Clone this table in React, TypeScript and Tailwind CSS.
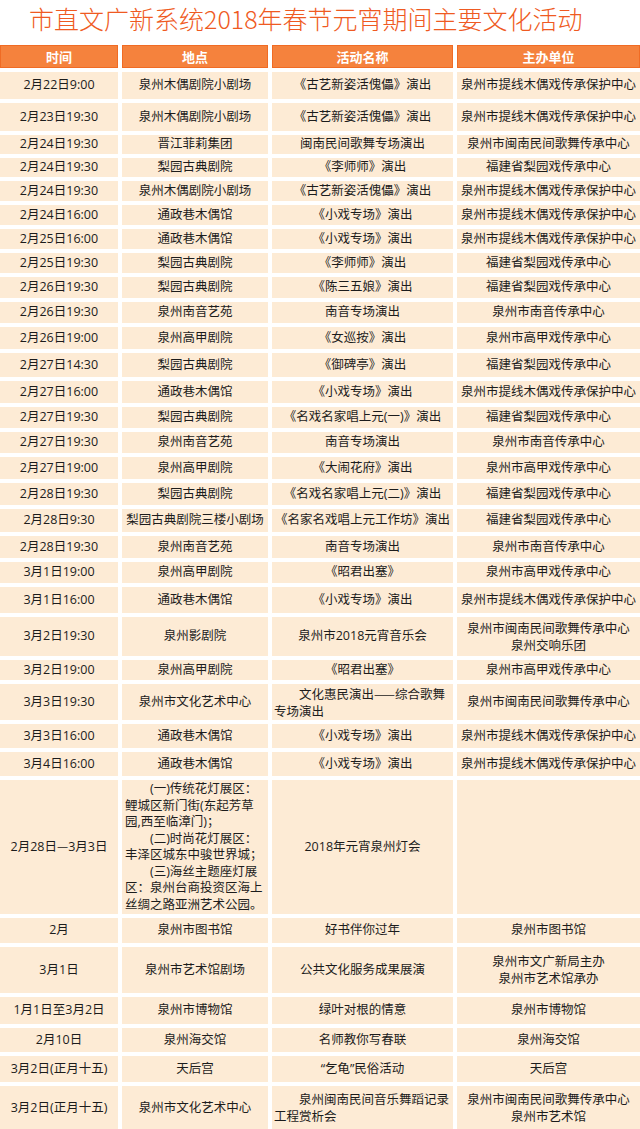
import React from "react";

type Content = string | string[] | { indent: string[] } | { lantern: true };

type Row = [string, Content, Content, Content, string];

const rows: Row[] = [
  ["2月22日9:00", "泉州木偶剧院小剧场", "《古艺新姿活傀儡》演出", "泉州市提线木偶戏传承保护中心", "h-[27px]"],
  ["2月23日19:30", "泉州木偶剧院小剧场", "《古艺新姿活傀儡》演出", "泉州市提线木偶戏传承保护中心", "h-[28px]"],
  ["2月24日19:30", "晋江菲莉集团", "闽南民间歌舞专场演出", "泉州市闽南民间歌舞传承中心", "h-[19px]"],
  ["2月24日19:30", "梨园古典剧院", "《李师师》演出", "福建省梨园戏传承中心", "h-[19px]"],
  ["2月24日19:30", "泉州木偶剧院小剧场", "《古艺新姿活傀儡》演出", "泉州市提线木偶戏传承保护中心", "h-[20px]"],
  ["2月24日16:00", "通政巷木偶馆", "《小戏专场》演出", "泉州市提线木偶戏传承保护中心", "h-[20px]"],
  ["2月25日16:00", "通政巷木偶馆", "《小戏专场》演出", "泉州市提线木偶戏传承保护中心", "h-[20px]"],
  ["2月25日19:30", "梨园古典剧院", "《李师师》演出", "福建省梨园戏传承中心", "h-[20px]"],
  ["2月26日19:30", "梨园古典剧院", "《陈三五娘》演出", "福建省梨园戏传承中心", "h-[21px]"],
  ["2月26日19:30", "泉州南音艺苑", "南音专场演出", "泉州市南音传承中心", "h-[21px]"],
  ["2月26日19:00", "泉州高甲剧院", "《女巡按》演出", "泉州市高甲戏传承中心", "h-[22px]"],
  ["2月27日14:30", "梨园古典剧院", "《御碑亭》演出", "福建省梨园戏传承中心", "h-[24px]"],
  ["2月27日16:00", "通政巷木偶馆", "《小戏专场》演出", "泉州市提线木偶戏传承保护中心", "h-[22px]"],
  ["2月27日19:30", "梨园古典剧院", "《名戏名家唱上元(一)》演出", "福建省梨园戏传承中心", "h-[21px]"],
  ["2月27日19:30", "泉州南音艺苑", "南音专场演出", "泉州市南音传承中心", "h-[21px]"],
  ["2月27日19:00", "泉州高甲剧院", "《大闹花府》演出", "泉州市高甲戏传承中心", "h-[22px]"],
  ["2月28日19:30", "梨园古典剧院", "《名戏名家唱上元(二)》演出", "福建省梨园戏传承中心", "h-[22px]"],
  ["2月28日9:30", "梨园古典剧院三楼小剧场", "《名家名戏唱上元工作坊》演出", "福建省梨园戏传承中心", "h-[23px]"],
  ["2月28日19:30", "泉州南音艺苑", "南音专场演出", "泉州市南音传承中心", "h-[22px]"],
  ["3月1日19:00", "泉州高甲剧院", "《昭君出塞》", "泉州市高甲戏传承中心", "h-[21px]"],
  ["3月1日16:00", "通政巷木偶馆", "《小戏专场》演出", "泉州市提线木偶戏传承保护中心", "h-[26px]"],
  ["3月2日19:30", "泉州影剧院", "泉州市2018元宵音乐会", ["泉州市闽南民间歌舞传承中心", "泉州交响乐团"], "h-[39px]"],
  ["3月2日19:00", "泉州高甲剧院", "《昭君出塞》", "泉州市高甲戏传承中心", "h-[20px]"],
  ["3月3日19:30", "泉州市文化艺术中心", { indent: ["文化惠民演出——综合歌舞", "专场演出"] }, "泉州市闽南民间歌舞传承中心", "h-[36px]"],
  ["3月3日16:00", "通政巷木偶馆", "《小戏专场》演出", "泉州市提线木偶戏传承保护中心", "h-[24px]"],
  ["3月4日16:00", "通政巷木偶馆", "《小戏专场》演出", "泉州市提线木偶戏传承保护中心", "h-[24px]"],
  ["2月28日—3月3日", { lantern: true }, "2018年元宵泉州灯会", "", "h-[134px]"],
  ["2月", "泉州市图书馆", "好书伴你过年", "泉州市图书馆", "h-[25px]"],
  ["3月1日", "泉州市艺术馆剧场", "公共文化服务成果展演", ["泉州市文广新局主办", "泉州市艺术馆承办"], "h-[46px]"],
  ["1月1日至3月2日", "泉州市博物馆", "绿叶对根的情意", "泉州市博物馆", "h-[27px]"],
  ["2月10日", "泉州海交馆", "名师教你写春联", "泉州海交馆", "h-[24px]"],
  ["3月2日(正月十五)", "天后宫", "“乞龟”民俗活动", "天后宫", "h-[26px]"],
  ["3月2日(正月十五)", "泉州市文化艺术中心", { indent: ["泉州闽南民间音乐舞蹈记录", "工程赏析会"] }, ["泉州市闽南民间歌舞传承中心", "泉州市艺术馆"], "h-[44px]"],
];

function T({ s }: { s: string }) {
  const parts = s.split(/(—+)/);
  return (
    <>
      {parts.map((p, i) =>
        /^—+$/.test(p) ? (
          <span key={i} className="font-['Noto_Sans_CJK_SC',sans-serif]">
            {p}
          </span>
        ) : (
          <React.Fragment key={i}>{p}</React.Fragment>
        )
      )}
    </>
  );
}

function Lantern() {
  return (
    <div className="w-full px-[3px] text-left leading-[16.5px] whitespace-nowrap">
      <div className="pl-[25px]">(一)传统花灯展区：</div>
      <div>鲤城区新门街(东起芳草</div>
      <div>园,西至临漳门)；</div>
      <div className="pl-[25px]">(二)时尚花灯展区：</div>
      <div>丰泽区城东中骏世界城；</div>
      <div className="pl-[25px]">(三)海丝主题座灯展</div>
      <div>区：泉州台商投资区海上</div>
      <div>丝绸之路亚洲艺术公园。</div>
    </div>
  );
}

function CellContent({ c }: { c: Content }) {
  if (typeof c === "string")
    return (
      <span className="whitespace-nowrap">
        <T s={c} />
      </span>
    );
  if (Array.isArray(c))
    return (
      <div className="leading-[17px] whitespace-nowrap">
        {c.map((l, i) => (
          <div key={i}>{l}</div>
        ))}
      </div>
    );
  if ("indent" in c)
    return (
      <div className="w-full px-[2px] text-left leading-[17px] whitespace-nowrap">
        <div className="pl-[25px]">
          <T s={c.indent[0]} />
        </div>
        <div>{c.indent[1]}</div>
      </div>
    );
  return <Lantern />;
}

export default function App() {
  const headers = ["时间", "地点", "活动名称", "主办单位"];
  return (
    <div className="w-[640px] bg-white font-['Open_Sans','Noto_Sans_CJK_SC',sans-serif]">
      <div className="h-[45px] pl-[29px] pt-[3px] text-[25px] leading-[30px] font-light text-[#ef5a22] font-['Noto_Sans_CJK_SC',sans-serif] whitespace-nowrap">
        市直文广新系统2018年春节元宵期间主要文化活动
      </div>
      <div className="grid grid-cols-[118px_146px_181px_183px] gap-[4px]">
        {headers.map((h) => (
          <div
            key={h}
            className="h-[23px] flex items-center justify-center bg-[#f5823d] border border-[#f06b24] text-white font-bold text-[13px] font-['Noto_Sans_CJK_SC',sans-serif]"
          >
            {h}
          </div>
        ))}
        {rows.map((r, ri) =>
          [r[0], r[1], r[2], r[3]].map((c, ci) => (
            <div
              key={ri + "-" + ci}
              className={
                r[4] +
                " flex items-center justify-center text-center bg-[#fdebd5] text-[12.5px] text-[#1c1c1c] overflow-hidden"
              }
            >
              <CellContent c={c} />
            </div>
          ))
        )}
      </div>
    </div>
  );
}
